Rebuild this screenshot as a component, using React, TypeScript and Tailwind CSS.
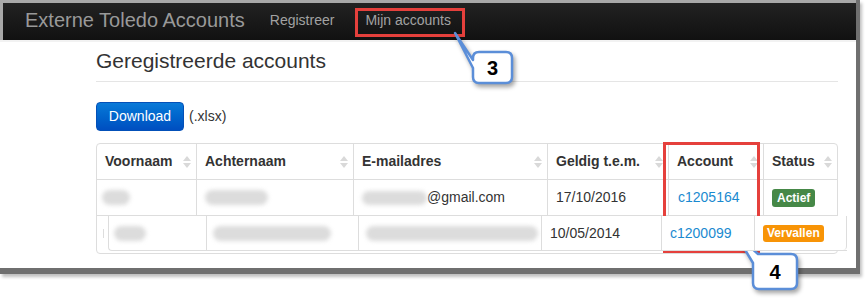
import React from "react";

function SortIcon() {
  return (
    <span className="flex flex-col gap-[2px] shrink-0">
      <span className="w-0 h-0 border-x-[4px] border-x-transparent border-b-[5px] border-b-[#d9d9d9]" />
      <span className="w-0 h-0 border-x-[4px] border-x-transparent border-t-[5px] border-t-[#d9d9d9]" />
    </span>
  );
}

function Blob({ w, h = 15 }: { w: number; h?: number }) {
  return <div className="shrink-0 rounded-full bg-[#dcdcdc] blur-[2px]" style={{ width: w, height: h }} />;
}

const headers = [
  { label: "Voornaam", w: "w-[100px]" },
  { label: "Achternaam", w: "w-[157px]" },
  { label: "E-mailadres", w: "w-[194px]" },
  { label: "Geldig t.e.m.", w: "w-[121px]" },
  { label: "Account", w: "w-[95px]" },
];

export default function App() {
  return (
    <div
      className="relative w-[867px] h-[299px] bg-white overflow-hidden text-[#333]"
      style={{ fontFamily: '"Liberation Sans", Arial, sans-serif' }}
    >
      <div className="w-[860px] h-[274px] border-r-4 border-b-[6px] border-[#6f6f6f] shadow-[2px_3px_3px_rgba(0,0,0,0.25)] flex flex-col">
        {/* navbar */}
        <nav className="h-[40px] shrink-0 border-t-[3px] border-l-[3px] border-[#a8a8a8] bg-gradient-to-b from-[#222] to-[#111] flex items-center pl-[22px] pb-[3px]">
          <span className="text-[20px] text-[#999]">Externe Toledo Accounts</span>
          <span className="ml-[25px] text-[14px] text-[#a2a2a2]">Registreer</span>
          <span className="ml-[31px] text-[14px] text-[#a2a2a2]">Mijn accounts</span>
        </nav>
        <div className="h-[2px] bg-[#f2f2f2]" />

        {/* content */}
        <div className="pl-[96px] pr-[18px] pt-[7px]">
          <h3 className="text-[21px] leading-[24px] pb-[8px] border-b border-[#e5e5e5]">Geregistreerde accounts</h3>

          <div className="mt-[20px] flex items-center">
            <button className="h-[29px] w-[88px] rounded-[4px] border border-[#0350b8] bg-gradient-to-b from-[#0a7ad8] to-[#004ec0] text-white text-[14px]">
              Download
            </button>
            <span className="ml-[5px] text-[14px]">(.xlsx)</span>
          </div>

          {/* table */}
          <div className="mt-[12px] w-[742px] h-[111px] border border-[#ddd] rounded-[4px] text-[14px]">
            <div className="flex h-[36px] border-b border-[#ddd] font-bold">
              {headers.map((h) => (
                <div key={h.label} className={`${h.w} shrink-0 flex items-center justify-between pl-[8px] pr-[5px] border-r border-[#ddd]`}>
                  <span>{h.label}</span>
                  <SortIcon />
                </div>
              ))}
              <div className="flex-1 flex items-center justify-between pl-[8px] pr-[5px]">
                <span>Status</span>
                <SortIcon />
              </div>
            </div>

            <div className="flex h-[36px] border-b border-[#ddd]">
              <div className="w-[100px] shrink-0 flex items-center pl-[5px] border-r border-[#ddd]">
                <Blob w={28} />
              </div>
              <div className="w-[157px] shrink-0 flex items-center pl-[8px] border-r border-[#ddd]">
                <Blob w={63} />
              </div>
              <div className="w-[194px] shrink-0 flex items-center pl-[8px] border-r border-[#ddd]">
                <Blob w={65} h={14} />
                <span>@gmail.com</span>
              </div>
              <div className="w-[121px] shrink-0 flex items-center pl-[8px] border-r border-[#ddd]">17/10/2016</div>
              <div className="w-[95px] shrink-0 flex items-center pl-[9px] border-r border-[#ddd] text-[#1a8ad0]">c1205164</div>
              <div className="flex-1 flex items-center pl-[8px]">
                <span className="h-[18px] px-[5px] rounded-[3px] bg-[#468847] text-white text-[12px] font-bold leading-[18px]">Actief</span>
              </div>
            </div>

            <div className="flex items-center">
              <div className="w-[7px] shrink-0 flex justify-end">
                <div className="w-px h-[9px] bg-[#ddd]" />
              </div>
              <div className="ml-[4px] shrink-0 relative z-10 flex h-[35px] w-[739px] border-l border-b border-[#ddd] rounded-bl-[4px] bg-white">
                <div className="w-[98px] shrink-0 flex items-center pl-[5px] border-r border-[#ddd]">
                  <Blob w={32} />
                </div>
                <div className="w-[152px] shrink-0 flex items-center pl-[6px] border-r border-[#ddd]">
                  <Blob w={118} />
                </div>
                <div className="w-[183px] shrink-0 flex items-center pl-[7px] border-r border-[#ddd] overflow-hidden">
                  <Blob w={172} />
                </div>
                <div className="w-[120px] shrink-0 flex items-center pl-[8px] border-r border-[#ddd]">10/05/2014</div>
                <div className="w-[93px] shrink-0 flex items-center pl-[8px] border-r border-[#ddd] text-[#1a8ad0]">c1200099</div>
                <div className="w-[92px] shrink-0 flex items-center pl-[8px] border-r border-[#ddd] rounded-br-[4px]">
                  <span className="h-[17px] px-[4px] rounded-[3px] bg-[#f89406] text-white text-[12px] font-bold leading-[17px]">Vervallen</span>
                </div>
              </div>
            </div>
          </div>
        </div>
      </div>

      {/* annotations */}
      <div className="absolute left-[355px] top-[8px] w-[110px] h-[29px] border-[3px] border-[#e5403c]" />
      <div className="absolute left-[663px] top-[142px] w-[97px] h-[111px] border-[3px] border-[#e5403c]" />

      <svg className="absolute left-0 top-0 drop-shadow-[2px_3px_2px_rgba(0,0,0,0.35)]" width="867" height="299">
        <path
          d="M479 52 H506 Q512 52 512 58 V77 Q512 83 506 83 H479 Q473 83 473 77 V68 L455 33 L473 60 V58 Q473 52 479 52 Z"
          fill="#fff"
          stroke="#5b8ed8"
          strokeWidth="2.5"
          strokeLinejoin="round"
        />
        <path
          d="M758 254 H791 Q797 254 797 260 V283 Q797 289 791 289 H759 Q753 289 753 283 V263 L735 233 L758 254 Z"
          fill="#fff"
          stroke="#5b8ed8"
          strokeWidth="2.5"
          strokeLinejoin="round"
        />
      </svg>
      <div className="absolute left-[473px] top-[52px] w-[39px] h-[31px] flex items-center justify-center text-[20px] font-bold text-black">3</div>
      <div className="absolute left-[753px] top-[254px] w-[44px] h-[35px] flex items-center justify-center text-[20px] font-bold text-black">4</div>
    </div>
  );
}
